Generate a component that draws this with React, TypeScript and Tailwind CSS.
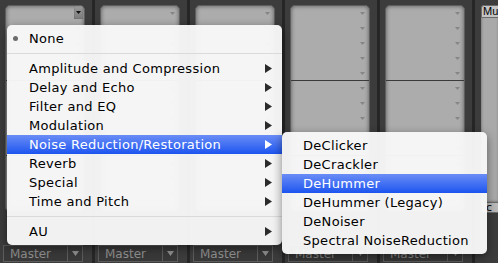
import React from "react";

const categories = [
  "Amplitude and Compression",
  "Delay and Echo",
  "Filter and EQ",
  "Modulation",
  "Noise Reduction/Restoration",
  "Reverb",
  "Special",
  "Time and Pitch",
];

const noiseItems = [
  "DeClicker",
  "DeCrackler",
  "DeHummer",
  "DeHummer (Legacy)",
  "DeNoiser",
  "Spectral NoiseReduction",
];

function Arrow({ active }: { active?: boolean }) {
  return (
    <svg width="7" height="9" viewBox="0 0 7 9" aria-hidden="true">
      <polygon points="0,0 7,4.5 0,9" fill={active ? "#ffffff" : "#2b2b2b"} />
    </svg>
  );
}

function SlotTriangle() {
  return (
    <svg width="5" height="3" viewBox="0 0 5 3" aria-hidden="true">
      <polygon points="0,0 5,0 2.5,3" fill="#858585" />
    </svg>
  );
}

/**
 * One effects rack panel, rows of 15px with a little dropdown arrow
 */
function RackPanel({ pressed }: { pressed?: boolean }) {
  const rows = Array.from({ length: 13 }, (_, i) => i);
  return (
    <div className="relative h-[207px] w-[80px] overflow-hidden rounded-[5px] border border-[#5e5e5e] bg-[#acacac] shadow-[inset_0_0_4px_rgba(0,0,0,0.5)]">
      {rows.map((i) => (
        <div
          key={i}
          className={`flex h-[15px] items-center justify-end pr-[4px] ${
            i === 4 || i === 9 ? "border-b border-[#3a3a3a]" : ""
          }`}
        >
          {pressed && i === 0 ? null : <SlotTriangle />}
        </div>
      ))}
      {pressed && (
        <div className="absolute right-[1px] top-0 flex h-[13px] w-[9px] items-center justify-center bg-gradient-to-b from-[#9a9a9a] to-[#7c7c7c] shadow-[inset_0_0_1px_rgba(0,0,0,0.6)]">
          <svg width="5" height="3" viewBox="0 0 5 3" aria-hidden="true">
            <polygon points="0,0 5,0 2.5,3" fill="#111" />
          </svg>
        </div>
      )}
    </div>
  );
}

function MasterBox() {
  return (
    <div className="ml-[3px] flex h-[17px] w-[80px] items-center border border-[#5c5c5c] bg-[#383838] text-[12px] leading-none text-[#8e8e8e]">
      <span className="flex-1 pl-[6px]">Master</span>
      <span className="flex h-full w-[15px] items-center justify-center border-l border-[#5c5c5c]">
        <svg width="7" height="5" viewBox="0 0 7 5" aria-hidden="true">
          <polygon points="0,0 7,0 3.5,5" fill="#8e8e8e" />
        </svg>
      </span>
    </div>
  );
}

function Column({ pressed }: { pressed?: boolean }) {
  return (
    <div className="flex h-full w-[95px] shrink-0 flex-col border-r-[3px] border-[#262626] pt-[5px]">
      <div className="pl-[5px]">
        <RackPanel pressed={pressed} />
      </div>
      <div className="mt-[33px]">
        <MasterBox />
      </div>
    </div>
  );
}

export default function App() {
  return (
    <div
      className="relative h-[263px] w-[498px] overflow-hidden bg-[#3c3c3c]"
      style={{ fontFamily: '"DejaVu Sans", "Liberation Sans", sans-serif' }}
    >
      {/* Mixer background */}
      <div className="flex h-full">
        <Column pressed />
        <Column />
        <Column />
        <Column />
        <Column />
        <div className="flex h-full flex-1 flex-col pl-[6px] pt-[5px]">
          <div className="h-[197px] rounded-tl-[4px] bg-[#a9a9a9] shadow-[inset_0_0_3px_rgba(0,0,0,0.5)]">
            <div className="flex h-[13px] items-center rounded-tl-[3px] border border-[#6a6a6a] bg-[#c4c4c4] pl-[1px] font-['Liberation_Sans'] text-[11px] leading-none text-black">
              Mu
            </div>
          </div>
          <div className="flex h-[11px] items-center border border-[#6a6a6a] bg-[#b8b8b8] pl-[4px] text-[11px] leading-none text-black">
            c
          </div>
        </div>
      </div>

      {/* Main effects menu */}
      <div className="absolute left-[7px] top-[25px] w-[275px] rounded-[5px] bg-[#f7f7f7]/[0.97] py-[4px] text-[13px] leading-[19px] tracking-[0.3px] text-black shadow-[0_3px_10px_rgba(0,0,0,0.45)]">
        <div className="relative flex h-[19px] items-center pl-[22px]">
          <span className="absolute left-[6px] top-[7px] h-[5px] w-[5px] rounded-full bg-[#6b6b6b]" />
          None
        </div>
        <div className="flex h-[11px] items-center">
          <div className="h-px w-full bg-[#dadada]" />
        </div>
        {categories.map((label) => {
          const active = label === "Noise Reduction/Restoration";
          return (
            <div
              key={label}
              className={`flex h-[19px] items-center justify-between pl-[22px] pr-[10px] ${
                active ? "bg-gradient-to-b from-[#6a8cf6] to-[#1b53ef] text-white" : ""
              }`}
            >
              <span>{label}</span>
              <Arrow active={active} />
            </div>
          );
        })}
        <div className="flex h-[11px] items-center">
          <div className="h-px w-full bg-[#dadada]" />
        </div>
        <div className="flex h-[19px] items-center justify-between pl-[22px] pr-[10px]">
          <span>AU</span>
          <Arrow />
        </div>
      </div>

      {/* Noise Reduction submenu */}
      <div className="absolute left-[282px] top-[132px] w-[205px] rounded-[5px] bg-[#f7f7f7]/[0.97] py-[4px] text-[13px] leading-[19px] tracking-[0.3px] text-black shadow-[0_3px_10px_rgba(0,0,0,0.45)]">
        {noiseItems.map((label) => (
          <div
            key={label}
            className={`flex h-[19px] items-center pl-[21px] ${
              label === "DeHummer" ? "bg-gradient-to-b from-[#6a8cf6] to-[#1b53ef] text-white" : ""
            }`}
          >
            {label}
          </div>
        ))}
      </div>
    </div>
  );
}
